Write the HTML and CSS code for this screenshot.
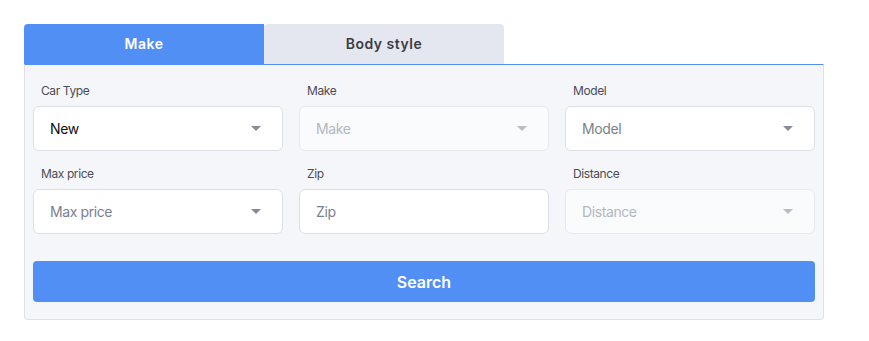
FILE: index.html
```html
<!DOCTYPE html>
<html lang="en">
<head>
    <meta charset="UTF-8">
    <meta name="viewport" content="width=device-width, initial-scale=1.0">
    <title>Car search</title>

    <link rel="stylesheet" href="styles.css">
</head>
<body>

<div class="search-widget">
    <div class="tabs">
        <div class="tab active">Make</div>
        <div class="tab">Body style</div>
    </div>

    <div class="panel">
        <div class="fields">
            <div class="field">
                <label>Car Type</label>
                <div class="select">
                    <span class="value">New</span>
                    <svg class="arrow" width="10" height="5" viewBox="0 0 10 5"><path d="M0 0h10L5 5z"/></svg>
                </div>
            </div>
            <div class="field">
                <label>Make</label>
                <div class="select disabled">
                    <span class="value">Make</span>
                    <svg class="arrow" width="10" height="5" viewBox="0 0 10 5"><path d="M0 0h10L5 5z"/></svg>
                </div>
            </div>
            <div class="field">
                <label>Model</label>
                <div class="select">
                    <span class="value placeholder">Model</span>
                    <svg class="arrow" width="10" height="5" viewBox="0 0 10 5"><path d="M0 0h10L5 5z"/></svg>
                </div>
            </div>

            <div class="field">
                <label>Max price</label>
                <div class="select">
                    <span class="value placeholder">Max price</span>
                    <svg class="arrow" width="10" height="5" viewBox="0 0 10 5"><path d="M0 0h10L5 5z"/></svg>
                </div>
            </div>
            <div class="field">
                <label>Zip</label>
                <input class="text-input" type="text" placeholder="Zip">
            </div>
            <div class="field">
                <label>Distance</label>
                <div class="select disabled">
                    <span class="value">Distance</span>
                    <svg class="arrow" width="10" height="5" viewBox="0 0 10 5"><path d="M0 0h10L5 5z"/></svg>
                </div>
            </div>
        </div>

        <button class="search-btn" type="button">Search</button>
    </div>
</div>

</body>
</html>
```

FILE: styles.css
```css
body {
    margin: 0;
    font-family: Inter, "Noto Sans", sans-serif;
    background: #fff;
}

.search-widget {
    width: 800px;
    margin: 24px 0 0 24px;
}

/* tabs */
.tabs {
    display: flex;
}

.tab {
    width: 240px;
    height: 40px;
    line-height: 40px;
    text-align: center;
    font-size: 14px;
    font-weight: 600;
    letter-spacing: 0.5px;
    color: #3a3d45;
    background: #e4e7ef;
    border-radius: 4px 4px 0 0;
}

.tab.active {
    color: #fff;
    background: #528ff5;
    border-radius: 4px 0 0 0;
}

/* panel */
.panel {
    background: #f5f6fa;
    border: 1px solid #dfe1e7;
    border-top-color: #528ff5;
    border-radius: 0 0 4px 4px;
    padding: 17px 8px 17px;
}

.fields {
    display: grid;
    grid-template-columns: repeat(3, 1fr);
    gap: 14px 16px;
}

.field label {
    display: block;
    font-size: 12px;
    line-height: 18px;
    letter-spacing: -0.4px;
    color: #4a4d55;
    margin: 0 0 6px 8px;
}

.select,
.text-input {
    display: flex;
    align-items: center;
    justify-content: space-between;
    box-sizing: border-box;
    width: 100%;
    height: 45px;
    padding: 0 26px 0 16px;
    background: #fff;
    border: 1px solid #dcdfe5;
    border-radius: 6px;
    font-family: inherit;
    font-size: 14px;
    letter-spacing: -0.4px;
}

.value {
    color: #111;
}

.value.placeholder {
    color: #7b8091;
}

.arrow {
    fill: #868b99;
    margin-right: -5px;
}

.select.disabled {
    background: #fafbfd;
    border-color: #e6e8ed;
}

.select.disabled .value {
    color: #b3b7c2;
}

.select.disabled .arrow {
    fill: #b8bcc6;
}

.text-input {
    outline: none;
    color: #111;
}

.text-input::placeholder {
    color: #7b8091;
}

.search-btn {
    display: block;
    width: 100%;
    height: 41px;
    margin-top: 27px;
    border: none;
    border-radius: 4px;
    background: #528ff5;
    color: #fff;
    font-family: inherit;
    font-size: 16px;
    font-weight: 600;
    letter-spacing: 0;
}
```
